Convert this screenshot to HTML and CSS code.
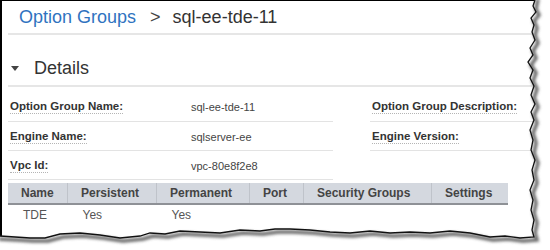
FILE: index.html
```html
<!DOCTYPE html>
<html lang="en">
<head>
    <meta charset="UTF-8">
    <title>sql-ee-tde-11</title>
    <link rel="stylesheet" href="styles.css">
</head>
<body>
    <div class="frame">
        <div class="crumb">
            <a href="#">Option Groups</a>
            <span class="sep">&gt;</span>
            <span class="current">sql-ee-tde-11</span>
        </div>

        <div class="section-head">
            <span class="caret"></span>
            <h2>Details</h2>
        </div>

        <div class="details">
            <div class="field">
                <span class="label">Option Group Name:</span>
                <span class="value">sql-ee-tde-11</span>
            </div>
            <div class="field">
                <span class="label">Option Group Description:</span>
                <span class="value"></span>
            </div>
            <div class="field">
                <span class="label">Engine Name:</span>
                <span class="value">sqlserver-ee</span>
            </div>
            <div class="field">
                <span class="label">Engine Version:</span>
                <span class="value"></span>
            </div>
            <div class="field">
                <span class="label">Vpc Id:</span>
                <span class="value">vpc-80e8f2e8</span>
            </div>
        </div>

        <table class="options">
            <thead>
                <tr>
                    <th class="c-name">Name</th>
                    <th class="c-pers">Persistent</th>
                    <th class="c-perm">Permanent</th>
                    <th class="c-port">Port</th>
                    <th class="c-sec">Security Groups</th>
                    <th class="c-set">Settings</th>
                </tr>
            </thead>
            <tbody>
                <tr>
                    <td>TDE</td>
                    <td>Yes</td>
                    <td>Yes</td>
                    <td></td>
                    <td></td>
                    <td></td>
                </tr>
            </tbody>
        </table>
    </div>

    <!-- torn paper edge -->
    <svg class="torn" width="550" height="250" viewBox="0 0 550 250">
        <defs>
            <filter id="soft" x="-10%" y="-10%" width="120%" height="120%">
                <feGaussianBlur stdDeviation="1.6"/>
            </filter>
        </defs>
        <path fill="#fff" d="M535 0 L533 6 L536 12 L531 18 L534 25 L532 32 L535 40 L530 48 L533 55 L528 62 L533 70 L530 78 L534 86 L531 95 L535 104 L531 112 L534 120 L530 130 L533 140 L531 150 L535 160 L532 170 L534 180 L530 190 L533 200 L531 210 L534 220 L532 230 L534 237 L520 238 L505 236 L490 237 L470 233 L450 231 L430 233 L410 232 L390 233 L370 231 L350 233 L330 232 L310 230 L290 229 L275 229 L260 231 L240 230 L220 233 L200 232 L180 231 L165 234 L150 233 L140 236 L120 238 L100 235 L80 233 L60 234 L45 238 L30 238 L15 237 L0 236 L0 250 L550 250 L550 0 Z"/>
        <polyline filter="url(#soft)" fill="none" stroke="#666" stroke-width="3.5" transform="translate(3 3)" points="535,-4 533,6 536,12 531,18 534,25 532,32 535,40 530,48 533,55 528,62 533,70 530,78 534,86 531,95 535,104 531,112 534,120 530,130 533,140 531,150 535,160 532,170 534,180 530,190 533,200 531,210 534,220 532,230 534,237 520,238 505,236 490,237 470,233 450,231 430,233 410,232 390,233 370,231 350,233 330,232 310,230 290,229 275,229 260,231 240,230 220,233 200,232 180,231 165,234 150,233 140,236 120,238 100,235 80,233 60,234 45,238 30,238 15,237 -4,236"/>
        <polyline fill="none" stroke="#111" stroke-width="1.3" points="535,0 533,6 536,12 531,18 534,25 532,32 535,40 530,48 533,55 528,62 533,70 530,78 534,86 531,95 535,104 531,112 534,120 530,130 533,140 531,150 535,160 532,170 534,180 530,190 533,200 531,210 534,220 532,230 534,237 520,238 505,236 490,237 470,233 450,231 430,233 410,232 390,233 370,231 350,233 330,232 310,230 290,229 275,229 260,231 240,230 220,233 200,232 180,231 165,234 150,233 140,236 120,238 100,235 80,233 60,234 45,238 30,238 15,237 0,236"/>
    </svg>
</body>
</html>
```

FILE: styles.css
```css
body {
    margin: 0;
    font-family: "Liberation Sans", Arial, sans-serif;
    color: #333;
    background: #fff;
    position: relative;
}
.frame {
    width: 550px;
    height: 250px;
    box-sizing: border-box;
    border-left: 2px solid #000;
    border-top: 1px solid #000;
    padding-left: 6px;
    overflow: hidden;
}
.crumb {
    padding: 5px 0 5px 11px;
    line-height: 22px;
    font-size: 18px;
    border-bottom: 2px solid #e6e6e6;
    white-space: nowrap;
}
.crumb a {
    color: #2f73bf;
    text-decoration: none;
}
.crumb .sep {
    color: #444;
    margin: 0 7px 0 9px;
}
.crumb .current {
    color: #333;
}
.section-head {
    display: flex;
    align-items: center;
    padding: 22px 0 6px 3px;
    border-bottom: 2px solid #e6e6e6;
}
.caret {
    width: 0;
    height: 0;
    border-left: 4px solid transparent;
    border-right: 4px solid transparent;
    border-top: 5px solid #444;
    margin-right: 15px;
}
.section-head h2 {
    margin: 0;
    font-size: 18px;
    font-weight: normal;
    line-height: 22px;
    color: #333;
}
.details {
    display: grid;
    grid-template-columns: 325px 1fr;
    column-gap: 37px;
    padding-top: 6px;
}
.field {
    display: grid;
    grid-template-columns: 181px 1fr;
    align-items: center;
    height: 28px;
    border-bottom: 1px solid #e3e3e3;
    padding-left: 2px;
    white-space: nowrap;
}
.field:nth-child(n+3) {
    height: 26px;
    padding-top: 2px;
}
.label {
    justify-self: start;
    font-size: 11.5px;
    font-weight: bold;
    color: #333;
    padding-bottom: 1px;
    border-bottom: 1px dotted #b5b5b5;
}
.value {
    font-size: 11px;
    color: #444;
}
.options {
    margin-top: 3px;
    width: 500px;
    border-collapse: collapse;
    font-size: 12px;
    white-space: nowrap;
}
.options th {
    height: 20px;
    padding: 0 0 0 13px;
    text-align: left;
    background: #d4d8df;
    color: #444;
    border-bottom: 2px solid #8e9196;
    border-left: 1px solid #bfc3ca;
}
.options th:first-child {
    border-left: none;
}
.options td {
    height: 20px;
    padding: 0 0 0 15px;
    color: #555;
}
.c-name { width: 46px; }
.c-pers { width: 75px; }
.c-perm { width: 79px; }
.c-port { width: 40px; }
.c-sec { width: 114px; }
.torn {
    position: absolute;
    top: 0;
    left: 0;
    pointer-events: none;
}
```
